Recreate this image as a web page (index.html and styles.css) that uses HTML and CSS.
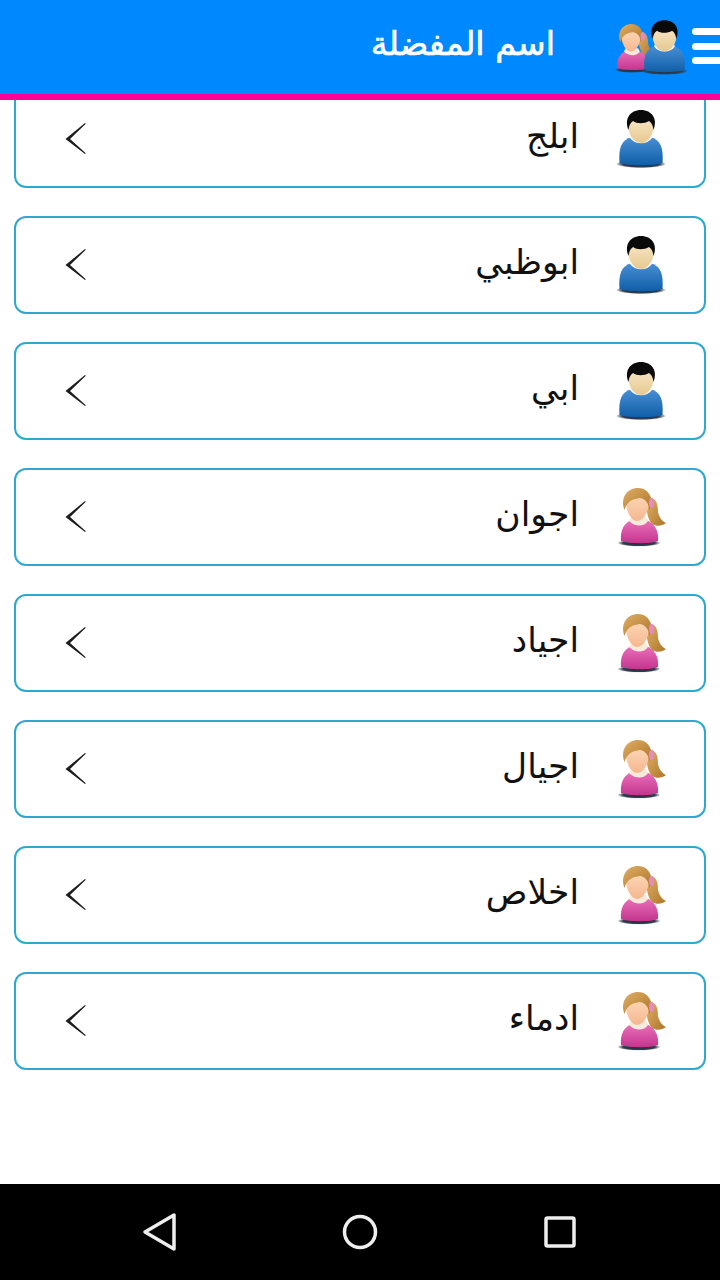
FILE: index.html
```html
<!DOCTYPE html>
<html lang="ar">
<head>
    <meta charset="UTF-8">
    <meta name="viewport" content="width=device-width, initial-scale=1.0">
    <title>اسم المفضلة</title>
    <link rel="stylesheet" href="styles.css">
</head>
<body>
    <svg class="sprites" aria-hidden="true">
        <defs>
            <linearGradient id="blue" x1="0" y1="0" x2="0" y2="1">
                <stop offset="0" stop-color="#4a90d4"/>
                <stop offset="1" stop-color="#0f5ea8"/>
            </linearGradient>
            <linearGradient id="pink" x1="0" y1="0" x2="0" y2="1">
                <stop offset="0" stop-color="#ea70ba"/>
                <stop offset="1" stop-color="#c4358f"/>
            </linearGradient>
            <linearGradient id="skin" x1="0" y1="0" x2="0" y2="1">
                <stop offset="0" stop-color="#f7e6c4"/>
                <stop offset="1" stop-color="#e6c88f"/>
            </linearGradient>
            <linearGradient id="skin2" x1="0" y1="0" x2="0" y2="1">
                <stop offset="0" stop-color="#fcd6b6"/>
                <stop offset="1" stop-color="#f5b78f"/>
            </linearGradient>
            <linearGradient id="hair" x1="0" y1="0" x2="1" y2="1">
                <stop offset="0" stop-color="#dfae66"/>
                <stop offset="1" stop-color="#ad7628"/>
            </linearGradient>
            <radialGradient id="shadow">
                <stop offset="0" stop-color="#1f2a36"/>
                <stop offset="0.75" stop-color="#2f3d4c"/>
                <stop offset="1" stop-color="#2f3d4c" stop-opacity="0.15"/>
            </radialGradient>
            <symbol id="male" viewBox="0 0 50 60">
                <ellipse cx="25" cy="54" rx="24.500" ry="4" fill="url(#shadow)"/>
                <path d="M3.500 53C2.500 38 5 30 16 27L34 27C45 30 47.500 38 46.500 53C38 56 12 56 3.500 53Z" fill="url(#blue)"/>
                <path d="M15 25L35 25L36 28C31 35 19 35 14 28Z" fill="#fff"/>
                <path d="M12 14C12 6 38 6 38 14C38 25 32 33 25 33C18 33 12 25 12 14Z" fill="url(#skin)"/>
                <path d="M12.500 20C8 9 14 0 25 0C36 0 42 9 37.500 20C37 16 36 13 33 11C28 14 21 14 17 11C14 13 13 16 12.500 20Z" fill="#0a0a0a"/>
            </symbol>
            <symbol id="female" viewBox="0 0 50 60">
                <ellipse cx="23" cy="55" rx="21" ry="3.500" fill="url(#shadow)"/>
                <path d="M33 10C41 9 42 18 42 24C43 29 46 33 50 35C46 38 41 39 36 36C33 33 30 25 31 18Z" fill="url(#hair)"/>
                <path d="M5 53C4 42 8 35 16 32L30 32C38 35 43 42 42 53C35 56 13 56 5 53Z" fill="url(#pink)"/>
                <path d="M15 29L30 29L32 33C28 39 19 39 13 33Z" fill="#f7eadb"/>
                <path d="M10 14C10 6 33 6 33 14C33 24 27 33 21 33C15 33 10 23 10 14Z" fill="url(#skin2)"/>
                <path d="M8.500 22C4 10 11 0 22 0C30 0 35 6 36 14L33 22C33 16 30 11 24 10C17 11 11 13 8.500 22Z" fill="url(#hair)"/>
                <ellipse cx="35.500" cy="15" rx="2.600" ry="5" fill="#e58bbd"/>
            </symbol>
            <symbol id="chevron" viewBox="0 0 24 34">
                <path d="M21 1L1.500 17L21 32L21.800 31.200L6 17L21.800 1.800Z" fill="#1c1c1c"/>
            </symbol>
        </defs>
    </svg>

    <header class="topbar">
        <h1 class="title">اسم المفضلة</h1>
        <div class="people">
            <svg class="people-f"><use href="#female"/></svg>
            <svg class="people-m"><use href="#male"/></svg>
        </div>
        <div class="menu"><span></span><span></span><span></span></div>
    </header>

    <main class="list">
        <div class="list-inner">
            <a class="row"><svg class="avatar"><use href="#male"/></svg><span class="name">ابلج</span><svg class="chev"><use href="#chevron"/></svg></a>
            <a class="row"><svg class="avatar"><use href="#male"/></svg><span class="name">ابوظبي</span><svg class="chev"><use href="#chevron"/></svg></a>
            <a class="row"><svg class="avatar"><use href="#male"/></svg><span class="name">ابي</span><svg class="chev"><use href="#chevron"/></svg></a>
            <a class="row"><svg class="avatar"><use href="#female"/></svg><span class="name">اجوان</span><svg class="chev"><use href="#chevron"/></svg></a>
            <a class="row"><svg class="avatar"><use href="#female"/></svg><span class="name">اجياد</span><svg class="chev"><use href="#chevron"/></svg></a>
            <a class="row"><svg class="avatar"><use href="#female"/></svg><span class="name">اجيال</span><svg class="chev"><use href="#chevron"/></svg></a>
            <a class="row"><svg class="avatar"><use href="#female"/></svg><span class="name">اخلاص</span><svg class="chev"><use href="#chevron"/></svg></a>
            <a class="row"><svg class="avatar"><use href="#female"/></svg><span class="name">ادماء</span><svg class="chev"><use href="#chevron"/></svg></a>
        </div>
    </main>

    <nav class="navbar">
        <svg class="nav-icon" viewBox="0 0 40 40"><path d="M5 20L34 3L34 37Z" fill="none" stroke="#eee" stroke-width="3.5" stroke-linejoin="round"/></svg>
        <svg class="nav-icon" viewBox="0 0 40 40"><circle cx="20" cy="20" r="15.5" fill="none" stroke="#eee" stroke-width="3.5"/></svg>
        <svg class="nav-icon" viewBox="0 0 40 40"><rect x="6" y="6" width="28" height="28" rx="1.5" fill="none" stroke="#eee" stroke-width="3.5"/></svg>
    </nav>
</body>
</html>
```

FILE: styles.css
```css
body {
    font-family: "DejaVu Sans", sans-serif;
    display: flex;
    flex-direction: column;
    height: 100vh;
    margin: 0;
    overflow: hidden;
    background-color: #fff;
}
.sprites {
    position: absolute;
    width: 0;
    height: 0;
}
.topbar {
    flex: none;
    display: flex;
    align-items: center;
    justify-content: flex-end;
    height: 94px;
    background-color: #0088ff;
    border-bottom: 6px solid #ff0099;
}
.title {
    margin: 0 58px 8px 0;
    color: #fff;
    font-size: 33.5px;
    font-weight: normal;
    -webkit-text-stroke: 0.7px #fff;
    direction: rtl;
}
.people {
    display: flex;
    align-items: flex-start;
    height: 57px;
    margin-top: 2px;
}
.people-f {
    width: 42px;
    height: 50px;
    margin-top: 4px;
}
.people-m {
    width: 47px;
    height: 57px;
    margin-left: -14px;
}
.menu {
    display: flex;
    flex-direction: column;
    gap: 7.5px;
    width: 28px;
    margin: 0 0 2px 4px;
}
.menu span {
    height: 7px;
    background-color: #fff;
    border-radius: 4px 0 0 4px;
}
.list {
    flex: 1;
    min-height: 0;
    overflow: hidden;
}
/* list is scrolled down a little, first card is cut by the bar */
.list-inner {
    display: flex;
    flex-direction: column;
    gap: 28px;
    margin-top: -10px;
    padding: 0 14px;
}
.row {
    flex: none;
    box-sizing: border-box;
    display: flex;
    align-items: center;
    direction: rtl;
    height: 98px;
    padding: 0 38px 0 48px;
    border: 2px solid #2fa8cf;
    border-radius: 12px;
}
.avatar {
    flex: none;
    width: 50px;
    height: 60px;
    margin-top: 2px;
}
.name {
    flex: 1;
    margin: 0 37px 6px 0;
    color: #111;
    font-size: 34.5px;
}
.chev {
    flex: none;
    width: 24px;
    height: 34px;
}
.navbar {
    flex: none;
    display: grid;
    grid-template-columns: repeat(3, 200px);
    justify-items: center;
    align-items: center;
    height: 96px;
    padding: 0 60px;
    background-color: #000;
}
.nav-icon {
    width: 40px;
    height: 40px;
}
```
